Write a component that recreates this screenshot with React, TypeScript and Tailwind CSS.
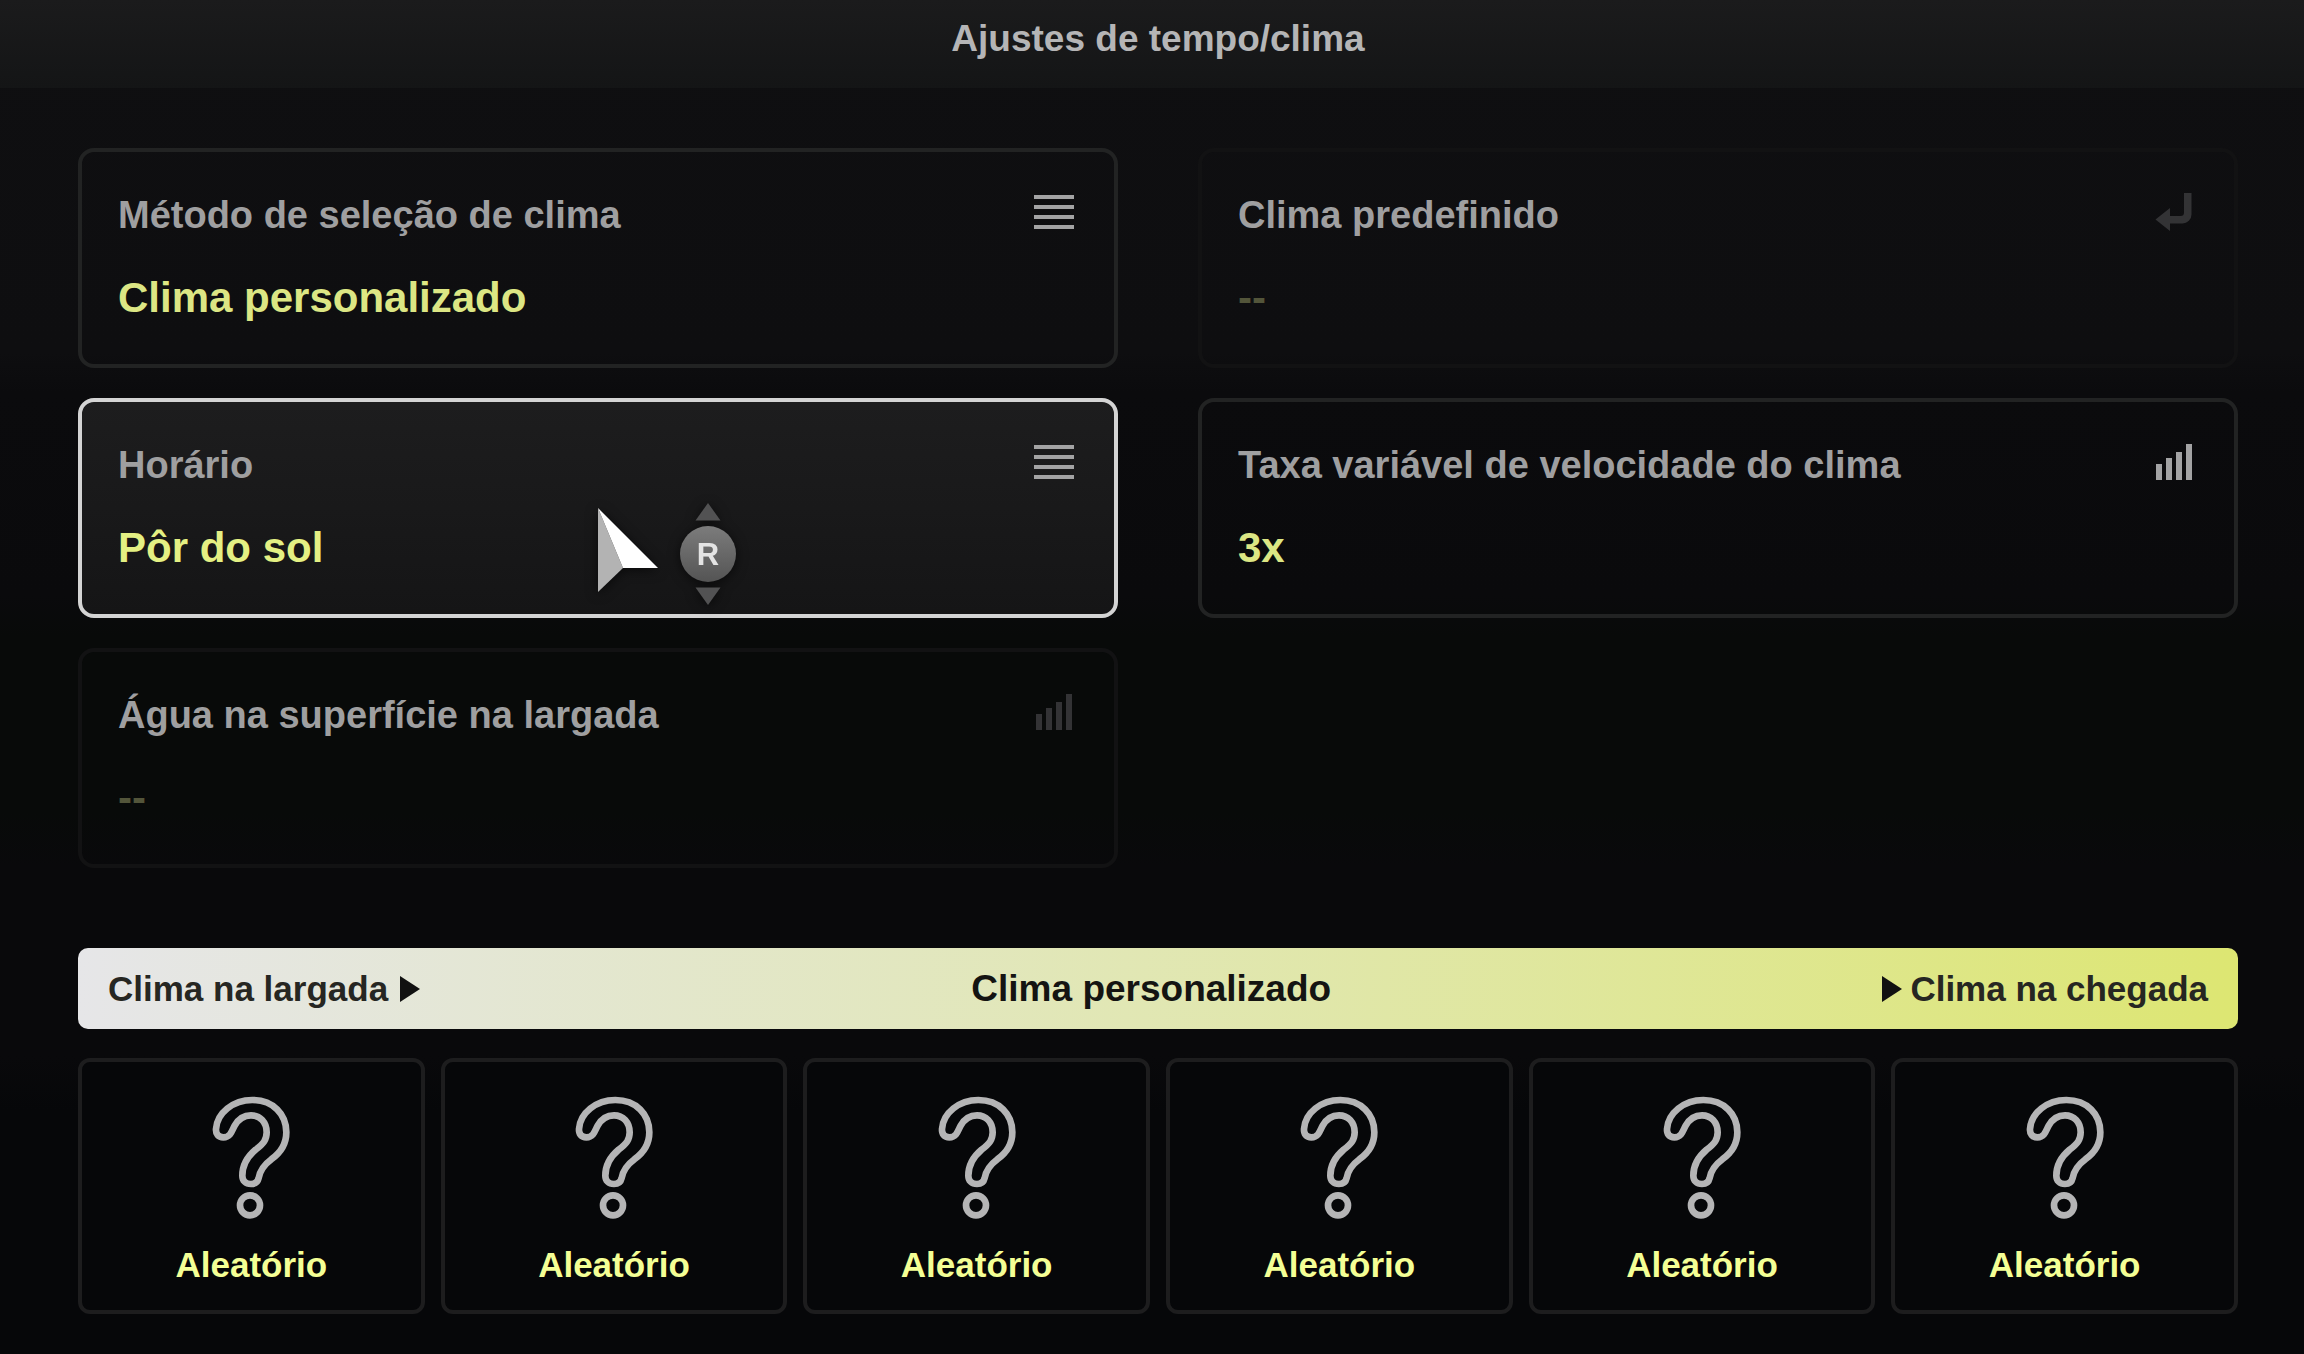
import React, { useState } from 'react';
import clsx from 'clsx';

type IconName = 'list' | 'enter' | 'bars';

interface Setting {
    id: string;
    label: string;
    value: string;
    icon: IconName;
    disabled?: boolean;
}

const settings: Setting[] = [
    { id: 'metodo', label: 'Método de seleção de clima', value: 'Clima personalizado', icon: 'list' },
    { id: 'predefinido', label: 'Clima predefinido', value: '--', icon: 'enter', disabled: true },
    { id: 'horario', label: 'Horário', value: 'Pôr do sol', icon: 'list' },
    { id: 'taxa', label: 'Taxa variável de velocidade do clima', value: '3x', icon: 'bars' },
    { id: 'agua', label: 'Água na superfície na largada', value: '--', icon: 'bars', disabled: true },
];

const slots = ['Aleatório', 'Aleatório', 'Aleatório', 'Aleatório', 'Aleatório', 'Aleatório'];

const SettingIcon: React.FC<{ name: IconName; className?: string }> = ({ name, className }) => (
    <svg viewBox="0 0 40 40" fill="currentColor" aria-hidden="true" className={clsx('size-10 shrink-0', className)}>
        {name === 'list' && <path d="M0 3h40v4H0zM0 13h40v4H0zM0 23h40v4H0zM0 33h40v4H0z" />}
        {name === 'bars' && <path d="M2 22h6v16H2zM12 16h6v22h-6zM22 10h6v28h-6zM32 2h6v36h-6z" />}
        {name === 'enter' && (
            <path d="M30 1h7.5v21.5a9 9 0 0 1-9 9H16V39L1.500 27.500 16 16v8h10.500a3.500 3.500 0 0 0 3.500-3.500z" />
        )}
    </svg>
);

const QuestionIcon: React.FC = () => (
    <svg
        viewBox="64 49 240 372"
        fill="none"
        stroke="#b5b5b6"
        strokeWidth="20"
        strokeLinejoin="round"
        aria-hidden="true"
        className="h-[124px] w-20"
    >
        <path d="M79 148C82 100 130 61 188 61C250 61 290 103 290 158C290 194 272 220 245 239C222 256 211 272 207 295C204 308 196 313 184 313C168 313 158 303 158 288C158 256 172 232 198 210C222 192 231 180 231 158C231 127 211 107 184 107C161 107 146 118 135 138C130 147 127 157 121 164C116 170 110 173 101 173C86 173 78 163 79 148Z" />
        <circle cx="181" cy="377" r="30" />
    </svg>
);

const PlayIcon: React.FC = () => (
    <svg viewBox="0 0 20 26" fill="#111111" aria-hidden="true" className="h-[26px] w-5">
        <path d="M0 0L20 13L0 26z" />
    </svg>
);

/**
 * Pointer with the right stick hint next to it
 */
const Pointer: React.FC = () => (
    <svg viewBox="0 0 140 106" aria-hidden="true" className="pointer-events-none absolute top-[100px] left-1/2 h-[106px] w-[140px] overflow-visible drop-shadow-[0_2px_6px_rgba(0,0,0,0.6)]">
        <defs>
            <linearGradient id="stick" x1="0" y1="0" x2="0" y2="1">
                <stop offset="0" stopColor="#7c7c7c" />
                <stop offset="1" stopColor="#545454" />
            </linearGradient>
        </defs>
        <path d="M0 6L25 66L0 90z" fill="#b3b3b3" />
        <path d="M0 6L60 66H25z" fill="#ffffff" />
        <path d="M110 1L122.500 18.500H97.500z" fill="#525253" />
        <path d="M110 103L122.500 85.500H97.500z" fill="#525253" />
        <circle cx="110" cy="52" r="28" fill="url(#stick)" />
        <text x="110" y="63" textAnchor="middle" fill="#e3e3e3" fontSize="31" fontWeight="700">R</text>
    </svg>
);

interface SettingCardProps {
    setting: Setting;
    selected: boolean;
    onSelect: (id: string) => void;
}

const SettingCard: React.FC<SettingCardProps> = ({ setting, selected, onSelect }) => (
    <button
        type="button"
        disabled={setting.disabled}
        onClick={() => onSelect(setting.id)}
        className={clsx(
            'relative flex flex-col gap-[34px] rounded-2xl border-4 px-9 py-10 text-left',
            selected && 'border-[#d4d4d4] bg-linear-to-b from-[#1d1d1e] to-[#151516]',
            !selected && !setting.disabled && 'border-[#222323]',
            setting.disabled && 'border-[#121213]'
        )}
    >
        <span className="flex w-full items-start justify-between pr-1">
            <span className="text-[38px] leading-[46px] text-[#9f9fa0]">{setting.label}</span>
            <SettingIcon name={setting.icon} className={setting.disabled ? 'text-[#333335]' : 'text-[#a3a3a4]'} />
        </span>
        <span
            className={clsx(
                'text-[42px] leading-[52px]',
                setting.disabled ? 'text-[#53553a]' : selected ? 'text-[#e4f083]' : 'text-[#dce684]'
            )}
        >
            {setting.value}
        </span>
        {selected && <Pointer />}
    </button>
);

const App: React.FC = () => {
    const [selectedId, setSelectedId] = useState<string>('horario');

    return (
        <div className="min-h-screen bg-[linear-gradient(to_bottom,#0f0f11_0%,#0e0e10_26%,#0b0b0d_29%,#0a0a0c_44%,#080a09_47%,#080a09_60%,#09090b_64%,#09090b_78%,#060709_82%,#060709_100%)] font-['Liberation_Sans',Arial,sans-serif] font-bold">
            <header className="h-[88px] bg-linear-to-b from-[#1b1b1c] to-[#141516] pt-4 pl-3">
                <h1 className="text-center text-[37px] leading-[46px] text-[#b5b5b6]">Ajustes de tempo/clima</h1>
            </header>

            <main className="pt-[60px] pr-[66px] pb-10 pl-[78px]">
                <section className="grid grid-cols-2 gap-x-20 gap-y-[30px]">
                    {settings.map((setting) => (
                        <SettingCard
                            key={setting.id}
                            setting={setting}
                            selected={setting.id === selectedId}
                            onSelect={setSelectedId}
                        />
                    ))}
                </section>

                <section className="mt-20">
                    <div className="flex h-[81px] items-center justify-between rounded-[10px] bg-linear-to-r from-[#e6e6e8] to-[#dde672] px-[30px] text-[35px] leading-[46px] text-[#262622]">
                        <span className="flex items-center gap-3">
                            Clima na largada
                            <PlayIcon />
                        </span>
                        <h2 className="text-[37px] text-[#141412]">Clima personalizado</h2>
                        <span className="flex items-center gap-2">
                            <PlayIcon />
                            Clima na chegada
                        </span>
                    </div>

                    <div className="mt-[29px] grid grid-cols-6 gap-4">
                        {slots.map((slot, index) => (
                            <button
                                key={index}
                                type="button"
                                className="flex flex-col items-center gap-[22px] rounded-xl border-4 border-[#1d1d1e] bg-[#060709] pt-[34px] pb-[22px] text-[35px] leading-[46px] text-[#f4ff95]"
                            >
                                <QuestionIcon />
                                {slot}
                            </button>
                        ))}
                    </div>
                </section>
            </main>
        </div>
    );
};

export default App;
